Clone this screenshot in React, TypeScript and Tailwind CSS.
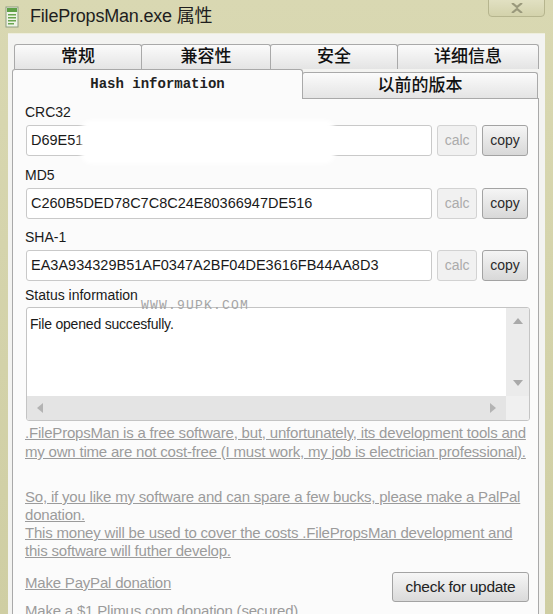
import React from 'react';

const FONT = "font-['Liberation_Sans','Noto_Sans_CJK_SC',sans-serif]";

const HashRow = ({ label, value, top }: { label: string; value: string; top: string }) => (
  <div className={top}>
    <div className="h-[20px] leading-[20px] text-[14px] text-[#1a1a1a] pl-[12px]">{label}</div>
    <div className="mt-[3px] flex items-center pl-[13px] pr-[10px] gap-[5px]">
      <div className="w-[407px] h-[31px] border border-[#c9c9c9] rounded-[3px] bg-white flex items-center px-[4px] text-[14.5px] text-[#1a1a1a] overflow-hidden whitespace-nowrap">
        {value}
      </div>
      <button className="w-[40px] h-[31px] border border-[#d2d2d2] rounded-[3px] bg-[#f1f1f1] text-[14px] text-[#ababab]">
        calc
      </button>
      <button className="w-[46px] h-[31px] border border-[#a3a3a3] rounded-[3px] bg-gradient-to-b from-[#f5f5f5] to-[#d8d8d8] text-[14px] text-[#2a2a2a]">
        copy
      </button>
    </div>
  </div>
);

const Tab = ({ w, children }: { w: string; children: React.ReactNode }) => (
  <div className={`${w} h-full border border-b-0 border-[#a9a9a9] rounded-t-[3px] bg-gradient-to-b from-[#fbfbfb] to-[#e4e4e4] flex items-center justify-center text-[17px] font-medium text-[#111] -ml-px first:ml-0`}>
    {children}
  </div>
);

export default function App() {
  return (
    <div className={`w-[553px] h-[614px] overflow-hidden bg-gradient-to-b from-[#d9d8b2] to-[#cfcea3] ${FONT}`}>
      {/* title bar */}
      <div className="h-[33px] flex items-center relative">
        <svg width="14" height="22" viewBox="0 0 14 22" className="ml-[5px]">
          <rect x="1" y="1" width="12" height="20" fill="#eef3e6" stroke="#8f9e80" />
          <rect x="2" y="2" width="10" height="4" fill="#5fa046" />
          <rect x="3" y="8" width="8" height="1.5" fill="#6aa650" />
          <rect x="3" y="11" width="8" height="1.5" fill="#6aa650" />
          <rect x="3" y="14" width="8" height="1.5" fill="#6aa650" />
          <rect x="3" y="17" width="6" height="1.5" fill="#6aa650" />
        </svg>
        <span className="ml-[11px] text-[18px] text-[#1e1e1e] tracking-[-0.2px]">FilePropsMan.exe 属性</span>
        <div className="absolute left-[488px] top-[-2px] w-[57px] h-[19px] rounded-b-[4px] border border-[#b6b58e] bg-gradient-to-b from-[#e2e1c3] to-[#d3d2ab] flex items-center justify-center">
          <svg width="12" height="10" viewBox="0 0 12 10">
            <path d="M1 0 L6 4 L11 0 M1 10 L6 6 L11 10" stroke="#9a997c" strokeWidth="2.2" fill="none" />
          </svg>
        </div>
      </div>

      {/* dialog body */}
      <div className="ml-[8px] w-[537px] h-[581px] bg-[#f3f3f1] border-t border-[#eeeedd] pt-[10px]">
        {/* tab row 1 */}
        <div className="h-[25px] flex pl-[6px]">
          <Tab w="w-[128px]">常规</Tab>
          <Tab w="w-[130px]">兼容性</Tab>
          <Tab w="w-[128px]">安全</Tab>
          <Tab w="w-[142px]">详细信息</Tab>
        </div>
        {/* tab row 2 */}
        <div className="h-[29px] flex items-end pl-[4px]">
          <div className="w-[291px] h-[30px] border border-b-0 border-[#a9a9a9] rounded-t-[3px] bg-[#fbfbfb] flex items-center justify-center text-[14px] font-bold text-[#222] font-['Liberation_Mono',monospace] relative z-10 -mb-px">
            Hash information
          </div>
          <div className="w-[236px] h-[26px] -ml-px border border-b-0 border-[#a9a9a9] rounded-t-[3px] bg-gradient-to-b from-[#fbfbfb] to-[#e4e4e4] flex items-center justify-center text-[17px] font-medium text-[#111]">
            以前的版本
          </div>
        </div>

        {/* tab page */}
        <div className="ml-[4px] w-[527px] h-[530px] border border-[#a9a9a9] bg-[#fbfbfb] relative pt-[3px]">
          <HashRow label="CRC32" value="D69E51" top="" />
          <div className="absolute left-[68px] top-[21px] w-[254px] h-[44px] bg-white rounded-[10px] blur-[2px]" />
          <HashRow label="MD5" value="C260B5DED78C7C8C24E80366947DE516" top="mt-[9px]" />
          <HashRow label="SHA-1" value="EA3A934329B51AF0347A2BF04DE3616FB44AA8D3" top="mt-[8px]" />

          <div className="mt-[4px] h-[20px] leading-[20px] text-[14px] text-[#1a1a1a] pl-[12px] relative">
            Status information
            <span className="absolute left-[128px] top-[14px] text-[13px] leading-[13px] tracking-[1.2px] text-[#a5a5a5] font-['Liberation_Mono',monospace]">
              WWW.9UPK.COM
            </span>
          </div>

          {/* status box */}
          <div className="ml-[13px] mt-[2px] w-[504px] h-[114px] border border-[#c4c4c4] rounded-[3px] bg-white flex flex-col overflow-hidden">
            <div className="flex flex-1">
              <div className="flex-1 px-[3px] pt-[6px] text-[14px] text-[#1a1a1a] tracking-[-0.2px]">File opened succesfully.</div>
              <div className="w-[23px] bg-[#ebebeb] flex flex-col items-center justify-between py-[10px]">
                <svg width="10" height="6" viewBox="0 0 10 6"><path d="M0 6 L5 0 L10 6 Z" fill="#a9a9a9" /></svg>
                <svg width="10" height="6" viewBox="0 0 10 6"><path d="M0 0 L5 6 L10 0 Z" fill="#a9a9a9" /></svg>
              </div>
            </div>
            <div className="h-[24px] flex">
              <div className="flex-1 bg-[#e4e4e4] flex items-center justify-between px-[10px]">
                <svg width="6" height="10" viewBox="0 0 6 10"><path d="M6 0 L0 5 L6 10 Z" fill="#b3b3b3" /></svg>
                <svg width="6" height="10" viewBox="0 0 6 10"><path d="M0 0 L6 5 L0 10 Z" fill="#b3b3b3" /></svg>
              </div>
              <div className="w-[23px] bg-[#f0f0f0]" />
            </div>
          </div>

          {/* info links */}
          <div className="pl-[12px] pr-[8px] mt-[2px] text-[15px] leading-[19px] text-[#9b9b9b] underline tracking-[-0.2px]">
            <p>.FilePropsMan is a free software, but, unfortunately, its development tools and my own time are not cost-free (I must work, my job is electrician professional).</p>
            <p className="mt-[27px] leading-[18px]">So, if you like my software and can spare a few bucks, please make a PalPal donation.</p>
            <p className="leading-[18px]">This money will be used to cover the costs .FilePropsMan development and this software will futher develop.</p>
          </div>

          <div className="mt-[12px] pl-[12px] pr-[9px] flex items-start justify-between">
            <span className="text-[15px] text-[#9b9b9b] underline tracking-[-0.2px]">Make PayPal donation</span>
            <button className="w-[137px] h-[30px] border border-[#a3a3a3] rounded-[3px] bg-gradient-to-b from-[#f6f6f6] to-[#dadada] text-[15.5px] text-[#222] tracking-[-0.3px]">
              check for update
            </button>
          </div>
          <div className="-mt-[2px] pl-[12px] text-[15px] text-[#9b9b9b] underline tracking-[-0.2px]">
            Make a $1 Plimus.com donation (secured)
          </div>
        </div>
      </div>
    </div>
  );
}
